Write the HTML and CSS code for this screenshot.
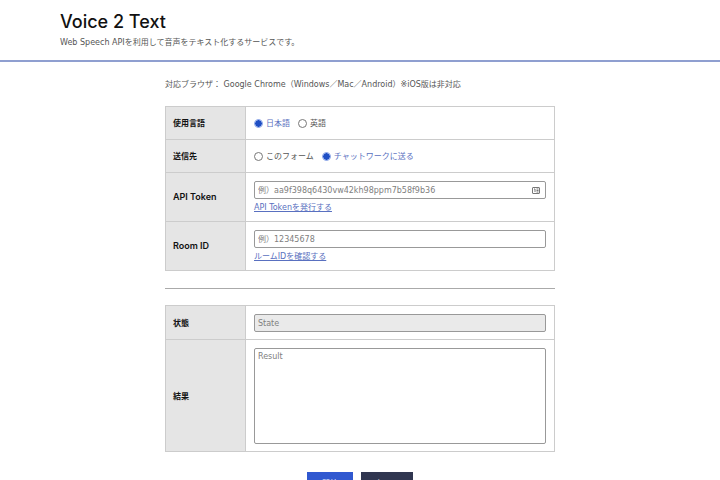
FILE: index.html
```html
<!DOCTYPE html>
<html lang="ja">
<head>
<meta charset="utf-8">
<title>Voice 2 Text</title>
<link rel="stylesheet" href="styles.css">
</head>
<body>
<header class="site-header">
  <div class="header-inner">
    <h1 class="site-title">Voice 2 Text</h1>
    <p class="lead">Web Speech APIを利用して音声をテキスト化するサービスです。</p>
  </div>
</header>
<main class="content">
  <p class="support">対応ブラウザ： Google Chrome（Windows／Mac／Android）※iOS版は非対応</p>
  <table class="form-table">
    <tr class="row-single">
      <th scope="row">使用言語</th>
      <td><div class="choices">
        <label class="choice"><input type="radio" name="lang" checked><span>日本語</span></label>
        <label class="choice"><input type="radio" name="lang"><span>英語</span></label>
      </div></td>
    </tr>
    <tr class="row-single">
      <th scope="row">送信先</th>
      <td><div class="choices">
        <label class="choice"><input type="radio" name="dest"><span>このフォーム</span></label>
        <label class="choice"><input type="radio" name="dest" checked><span>チャットワークに送る</span></label>
      </div></td>
    </tr>
    <tr class="row-help">
      <th scope="row"><label class="latin" for="token">API Token</label></th>
      <td>
        <div class="field">
          <input class="control" id="token" type="text" placeholder="例）aa9f398q6430vw42kh98ppm7b58f9b36">
          <svg class="field-icon" viewBox="0 0 8 7" aria-hidden="true"><rect x=".5" y=".5" width="7" height="6" rx=".5"/><path d="M2 2h1v3M4.5 2H6.5M4.5 3.5H6.5M4.5 5H6.5"/></svg>
        </div>
        <a class="help" href="#">API Tokenを発行する</a>
      </td>
    </tr>
    <tr class="row-help">
      <th scope="row"><label class="latin" for="room">Room ID</label></th>
      <td>
        <input class="control" id="room" type="text" placeholder="例）12345678">
        <a class="help" href="#">ルームIDを確認する</a>
      </td>
    </tr>
  </table>
  <hr class="divider">
  <table class="form-table">
    <tr class="row-single">
      <th scope="row"><label for="state">状態</label></th>
      <td><input class="control state" id="state" type="text" placeholder="State" readonly></td>
    </tr>
    <tr>
      <th scope="row"><label for="result">結果</label></th>
      <td><textarea class="control result" id="result" placeholder="Result"></textarea></td>
    </tr>
  </table>
  <div class="actions">
    <button class="button primary" type="button">開始</button>
    <button class="button" type="button">クリア</button>
  </div>
</main>
</body>
</html>
```
FILE: styles.css
```css
* { box-sizing: border-box; }
body {
  margin: 0;
  background: #fff;
  color: #555;
  font: 8px/16px "DejaVu Sans", "Noto Sans CJK JP", sans-serif;
}
.site-header { border-bottom: 2px solid #8f9fd0; }
.header-inner {
  max-width: 600px;
  margin: 0 auto;
  padding: 10px 0 9px;
}
.site-title {
  margin: 0 0 1px;
  color: #111;
  font-family: Inter, sans-serif;
  font-size: 18px;
  font-weight: 500;
  line-height: 24px;
}
.lead, .support { margin: 0; }
.content {
  max-width: 390px;
  margin: 0 auto;
  padding: 15px 0 16px;
}
.support { margin-bottom: 13px; }
.form-table {
  width: 100%;
  border-collapse: collapse;
}
.form-table th, .form-table td {
  border: 1px solid #ccc;
  padding: 8px 8px 7px;
  vertical-align: middle;
}
.form-table th {
  width: 80px;
  padding: 7px;
  background: #e5e5e5;
  color: #111;
  font-family: Inter, "Noto Sans CJK JP", sans-serif;
  font-weight: 600;
  text-align: left;
}
.form-table .row-help td { padding-bottom: 6px; }
.form-table .latin { font-size: 9px; }
.row-single { height: 33px; }
.choices { display: flex; gap: 8px; }
.choice { display: flex; align-items: center; gap: 3px; }
.choice input {
  appearance: none;
  width: 9px;
  height: 9px;
  margin: 0;
  border: 1px solid #777;
  border-radius: 50%;
  background: #fff;
}
.choice input:checked {
  border-color: #9db4ee;
  background: radial-gradient(circle, #1f4fc4 0 3px, #dce5fb 4px);
}
.choice input:checked + span { color: #5970c0; }
.field { position: relative; }
.control {
  display: block;
  width: 100%;
  height: 18px;
  margin: 0;
  padding: 0 3px;
  border: 1px solid #999;
  border-radius: 2px;
  background: #fff;
  color: #444;
  font: inherit;
}
.control::placeholder { color: #808080; opacity: 1; }
.state { background: #eaeaea; }
.result { height: 96px; resize: none; }
.field-icon {
  position: absolute;
  right: 6px;
  top: 6px;
  width: 8px;
  height: 7px;
  fill: none;
  stroke: #777;
}
.help {
  display: table;
  margin-top: 1px;
  color: #5970c0;
  line-height: 15px;
}
.divider {
  height: 1px;
  margin: 17px 0 16px;
  border: 0;
  background: #aaa;
}
.actions {
  display: flex;
  justify-content: center;
  gap: 8px;
  padding-top: 20px;
}
.button {
  min-width: 46px;
  padding: 4px 14px;
  border: 0;
  background: #303650;
  color: #fff;
  font: inherit;
}
.primary { background: #3058d0; }
```
